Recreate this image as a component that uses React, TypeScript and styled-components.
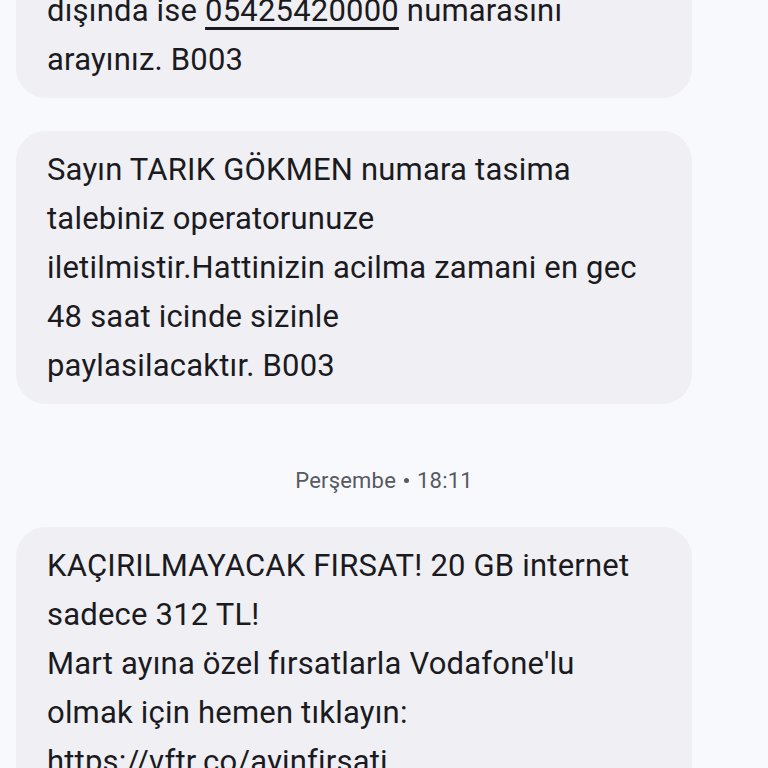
import React from "react";
import styled, { createGlobalStyle } from "styled-components";

const Global = createGlobalStyle`
  html, body { margin: 0; padding: 0; background: #f8f9fd; }
  body { font-family: Roboto, "Noto Sans", sans-serif; -webkit-font-smoothing: antialiased; }
`;

const Screen = styled.div`
  width: 768px;
  height: 768px;
  overflow: hidden;
  background: #f8f9fd;
`;

const Thread = styled.div`
  display: flex;
  flex-direction: column;
  margin-top: -77px;
`;

const Bubble = styled.div<{ $gap?: number }>`
  background: #efeff4;
  border-radius: 30px;
  padding: 14px 31px;
  margin: ${(p) => p.$gap ?? 0}px 76px 0 16px;
  color: #1b1b1f;
  font-size: 31px;
  line-height: 49px;
  letter-spacing: 0.2px;
`;

const Line = styled.div`
  white-space: nowrap;
`;

const Phone = styled.span`
  text-decoration: underline;
  text-decoration-thickness: 2.5px;
  text-underline-offset: 6px;
`;

const Stamp = styled.div`
  display: flex;
  justify-content: center;
  align-items: center;
  gap: 8px;
  height: 123px;
  padding-top: 30px;
  box-sizing: border-box;
  font-size: 22px;
  letter-spacing: 0.2px;
  color: #565a61;
`;

const Dot = styled.span`
  width: 5px;
  height: 5px;
  border-radius: 50%;
  background: #565a61;
`;

export default function App() {
  return (
    <Screen>
      <Global />
      <Thread>
        <Bubble>
          <Line>Bilgi için 0542 542 0000'ı, yurt</Line>
          <Line>
            dışında ise <Phone>05425420000</Phone> numarasını
          </Line>
          <Line>arayınız. B003</Line>
        </Bubble>
        <Bubble $gap={33}>
          <Line>Sayın TARIK GÖKMEN numara tasima</Line>
          <Line>talebiniz operatorunuze</Line>
          <Line>iletilmistir.Hattinizin acilma zamani en gec</Line>
          <Line>48 saat icinde sizinle</Line>
          <Line>paylasilacaktır. B003</Line>
        </Bubble>
        <Stamp>
          <span>Perşembe</span>
          <Dot />
          <span>18:11</span>
        </Stamp>
        <Bubble>
          <Line>KAÇIRILMAYACAK FIRSAT! 20 GB internet</Line>
          <Line>sadece 312 TL!</Line>
          <Line>Mart ayına özel fırsatlarla Vodafone'lu</Line>
          <Line>olmak için hemen tıklayın:</Line>
          <Line>https://vftr.co/ayinfirsati</Line>
        </Bubble>
      </Thread>
    </Screen>
  );
}
